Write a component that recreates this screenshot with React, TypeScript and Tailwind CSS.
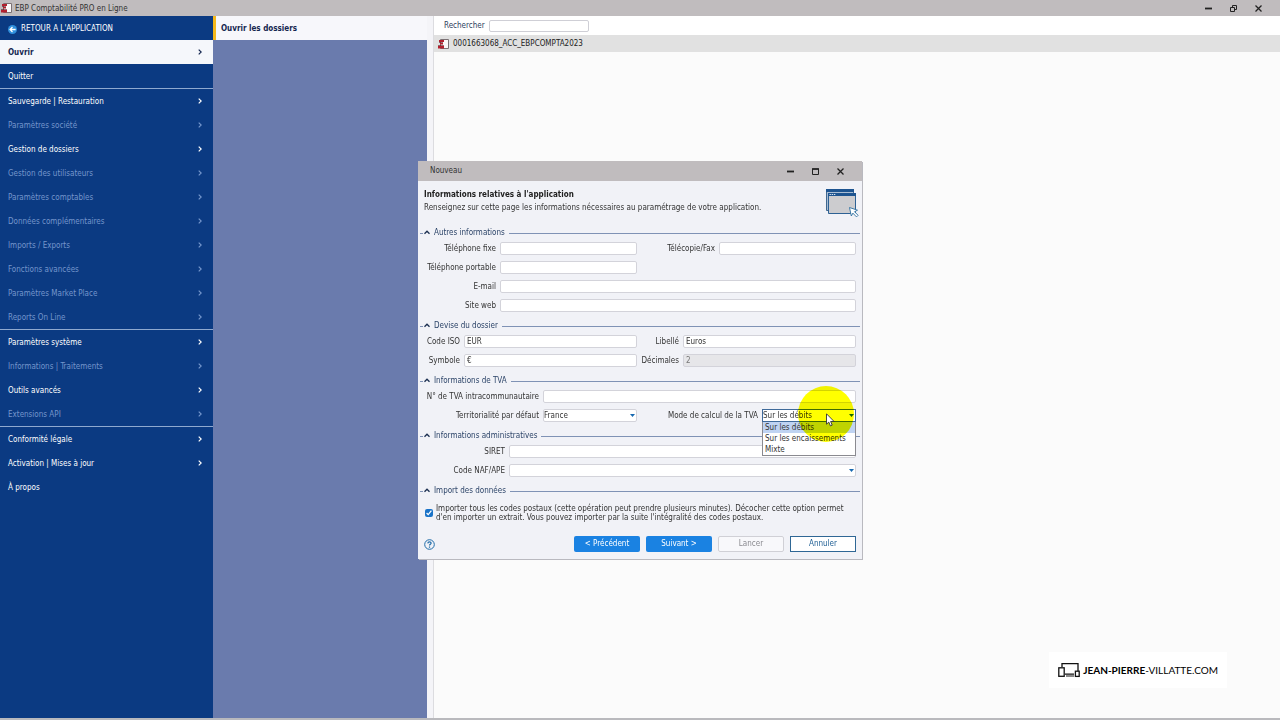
import React from 'react';

interface MenuEntry {
  label: string;
  disabled?: boolean;
  active?: boolean;
  arrow?: boolean;
}

const MENU: MenuEntry[][] = [
  [
    { label: 'Ouvrir', active: true, arrow: true },
    { label: 'Quitter' },
  ],
  [
    { label: 'Sauvegarde | Restauration', arrow: true },
    { label: 'Paramètres société', disabled: true, arrow: true },
    { label: 'Gestion de dossiers', arrow: true },
    { label: 'Gestion des utilisateurs', disabled: true, arrow: true },
    { label: 'Paramètres comptables', disabled: true, arrow: true },
    { label: 'Données complémentaires', disabled: true, arrow: true },
    { label: 'Imports / Exports', disabled: true, arrow: true },
    { label: 'Fonctions avancées', disabled: true, arrow: true },
    { label: 'Paramètres Market Place', disabled: true, arrow: true },
    { label: 'Reports On Line', disabled: true, arrow: true },
  ],
  [
    { label: 'Paramètres système', arrow: true },
    { label: 'Informations | Traitements', disabled: true, arrow: true },
    { label: 'Outils avancés', arrow: true },
    { label: 'Extensions API', disabled: true, arrow: true },
  ],
  [
    { label: 'Conformité légale', arrow: true },
    { label: 'Activation | Mises à jour', arrow: true },
    { label: 'À propos' },
  ],
];

const VAT_MODES = ['Sur les débits', 'Sur les encaissements', 'Mixte'];

const AppIcon = () => (
  <svg className="h-3 w-[11px] shrink-0" viewBox="0 0 11 12">
    <path d="M2.5 1.5h8v9h-8z" fill="#fbf8f8" stroke="#7c7275" />
    <path d="M1 2h5v2H1zM2 5h3v1.5H2zM0 8h6v2.5H0z" fill="#b3202e" />
    <path d="M0 7.5h6M1 4.5h4" stroke="#5a1a22" strokeWidth="0.6" />
  </svg>
);

const BackIcon = () => (
  <svg className="h-[9px] w-[9px] shrink-0" viewBox="0 0 10 10">
    <circle cx="5" cy="5" r="5" fill="#2f8fdc" />
    <path d="M8.5 5H2.5M5 2.3L2.3 5L5 7.7" fill="none" stroke="#fff" strokeWidth="1.4" />
  </svg>
);

const MinimizeIcon = () => (
  <svg className="h-[9px] w-[9px]" viewBox="0 0 9 9">
    <path d="M1 4.5h7" stroke="#222" strokeWidth="1.8" />
  </svg>
);

const RestoreIcon = () => (
  <svg className="h-[9px] w-[9px]" viewBox="0 0 9 9">
    <path d="M3.5 3V1.5h4v4H6M1.5 3.5h4v4h-4z" fill="none" stroke="#222" />
  </svg>
);

const MaximizeIcon = () => (
  <svg className="h-[9px] w-[9px]" viewBox="0 0 9 9">
    <path d="M1.5 2h6v5.5h-6z" fill="none" stroke="#222" />
    <path d="M1 2h7" stroke="#222" strokeWidth="1.6" />
  </svg>
);

const CloseIcon = () => (
  <svg className="h-[9px] w-[9px]" viewBox="0 0 9 9">
    <path d="M1.5 1.5l6 6M7.5 1.5l-6 6" stroke="#222" strokeWidth="1.3" />
  </svg>
);

const WindowsIcon = () => (
  <svg className="h-[30px] w-[34px] shrink-0" viewBox="0 0 34 30">
    <path d="M1.5 1.5h27v21h-27z" fill="#a9bdd4" stroke="#40688f" />
    <path d="M1 1h28v3H1z" fill="#1d5490" />
    <path d="M3.5 5.5h27v20h-27z" fill="#cccccf" stroke="#2d6194" />
    <path d="M3 5h28v3H3z" fill="#1d5490" />
    <path d="M4.5 6.5h6" stroke="#d5e3f0" strokeDasharray="1.4 0.8" />
    <path d="M24.5 19.5l8 2.7-3 1.5 3.6 3.6-1.6 1.6-3.6-3.7-1.6 2.8z" fill="#fff" stroke="#2d6fa0" strokeWidth="0.9" />
  </svg>
);

const DropArrow = () => (
  <svg className="pointer-events-none absolute top-[5px] right-[2px] h-[3px] w-[5px]" viewBox="0 0 5 3">
    <path d="M0 0h5L2.5 3z" fill="#1668b0" />
  </svg>
);

const CursorHighlight = () => (
  <div className="pointer-events-none absolute top-[-23px] left-9 z-20 h-14 w-14 rounded-full bg-[#ffff00] mix-blend-multiply" />
);

const Cursor = () => (
  <svg className="pointer-events-none absolute top-1 left-16 z-30 h-[14px] w-[9px]" viewBox="0 0 9 14">
    <path d="M0.5 0.8v10.4l2.3-2.1 1.6 3.8 1.8-.8-1.6-3.6h3.5z" fill="#fff" stroke="#333" strokeWidth="0.9" />
  </svg>
);

const fieldClass =
  'block h-[13px] w-full min-w-0 rounded-[2px] border border-[#d3d3da] bg-white text-[#333] outline-none';

interface FieldProps {
  id: string;
  label: string;
  labelWidth: string;
  children?: React.ReactNode;
  value?: string;
  disabled?: boolean;
  full?: boolean;
}

const Field: React.FC<FieldProps> = ({ id, label, labelWidth, children, value, disabled, full }) => (
  <div className={`flex h-[13px] items-center gap-1 ${full ? 'col-span-2' : ''}`}>
    <label htmlFor={id} className={`${labelWidth} flex shrink-0 justify-end whitespace-nowrap`}>
      {label}
    </label>
    <div className="relative min-w-0 flex-1">
      {children ?? (
        <input
          id={id}
          type="text"
          defaultValue={value}
          disabled={disabled}
          className={`${fieldClass} px-[2px] disabled:bg-[#e6e6e9] disabled:text-[#777]`}
        />
      )}
    </div>
  </div>
);

const Section: React.FC<{ title: string; children: React.ReactNode }> = ({ title, children }) => (
  <section>
    <button type="button" className="flex h-3 w-full items-center px-[2px] text-[#2c4468]">
      <span className="h-px w-[3px] bg-[#7f92b5]" />
      <svg className="mr-1 ml-px h-[7px] w-[6px]" viewBox="0 0 6 7">
        <path d="M0.5 3.8L3 1.2L5.5 3.8" fill="none" stroke="#1b2f50" strokeWidth="1.3" />
      </svg>
      <span className="whitespace-nowrap">{title}</span>
      <span className="ml-1 h-px flex-1 bg-[#7f92b5]" />
    </button>
    {children}
  </section>
);

const FieldGrid: React.FC<{ children: React.ReactNode }> = ({ children }) => (
  <div className="grid grid-cols-2 gap-[6px] px-[6px] pt-[3px]">{children}</div>
);

const Sidebar = () => (
  <nav className="flex w-[213px] shrink-0 flex-col bg-[#0b3a82] text-white">
    <button type="button" className="flex h-6 items-center gap-1 px-2 pt-[2px]">
      <BackIcon />
      RETOUR A L'APPLICATION
    </button>
    {MENU.map((group, i) => (
      <ul key={i} className={i > 0 ? 'border-t border-[#8fa9cf]' : ''}>
        {group.map((item) => (
          <li key={item.label}>
            <button
              type="button"
              disabled={item.disabled}
              className={`flex h-6 w-full items-center justify-between pt-[2px] pr-[11px] pl-2 ${
                item.active ? 'bg-[#f5f7fb] font-bold text-[#14264f]' : item.disabled ? 'text-[#7596cc]' : 'text-white'
              }`}
            >
              {item.label}
              {item.arrow && (
                <svg className="mb-[2px] h-[6px] w-[4px]" viewBox="0 0 4 6">
                  <path d="M0.7 0.6L3.2 3L0.7 5.4" fill="none" stroke="currentColor" strokeWidth="1.2" />
                </svg>
              )}
            </button>
          </li>
        ))}
      </ul>
    ))}
  </nav>
);

const NewFileDialog = () => (
  <div role="dialog" aria-label="Nouveau" className="w-[444px] bg-[#f1f2f7] text-[#333] shadow-[1px_1px_0_#b9b9bf]">
    <header className="flex h-5 items-center justify-between bg-[#c0bcbe] pr-[17px] pl-3">
      <span>Nouveau</span>
      <div className="flex gap-4">
        <button type="button" aria-label="Réduire"><MinimizeIcon /></button>
        <button type="button" aria-label="Agrandir"><MaximizeIcon /></button>
        <button type="button" aria-label="Fermer"><CloseIcon /></button>
      </div>
    </header>

    <div className="flex h-[46px] justify-between pt-[7px] pr-[3px] pl-[6px]">
      <div className="leading-[13px]">
        <h1 className="font-bold text-[#222]">Informations relatives à l'application</h1>
        <p>Renseignez sur cette page les informations nécessaires au paramétrage de votre application.</p>
      </div>
      <WindowsIcon />
    </div>

    <form className="flex flex-col gap-2">
      <Section title="Autres informations">
        <FieldGrid>
          <Field id="phone" label="Téléphone fixe" labelWidth="w-[72px]" />
          <Field id="fax" label="Télécopie/Fax" labelWidth="w-[72px]" />
          <Field id="mobile" label="Téléphone portable" labelWidth="w-[72px]" />
          <Field id="email" label="E-mail" labelWidth="w-[72px]" full />
          <Field id="site" label="Site web" labelWidth="w-[72px]" full />
        </FieldGrid>
      </Section>

      <Section title="Devise du dossier">
        <FieldGrid>
          <Field id="iso" label="Code ISO" labelWidth="w-9" value="EUR" />
          <Field id="currency" label="Libellé" labelWidth="w-9" value="Euros" />
          <Field id="symbol" label="Symbole" labelWidth="w-9" value="€" />
          <Field id="decimals" label="Décimales" labelWidth="w-9" value="2" disabled />
        </FieldGrid>
      </Section>

      <Section title="Informations de TVA">
        <FieldGrid>
          <Field id="vat" label="N° de TVA intracommunautaire" labelWidth="w-[115px]" full />
          <Field id="country" label="Territorialité par défaut" labelWidth="w-[115px]">
            <select id="country" className={`${fieldClass} appearance-none`}>
              <option>France</option>
            </select>
            <DropArrow />
          </Field>
          <Field id="vat-mode" label="Mode de calcul de la TVA" labelWidth="w-[115px]">
            <select
              id="vat-mode"
              className="block h-[13px] w-full appearance-none border border-[#3f6a9a] bg-white text-[#333] outline-none"
            >
              {VAT_MODES.map((mode) => (
                <option key={mode}>{mode}</option>
              ))}
            </select>
            <DropArrow />
            <ul role="listbox" className="absolute top-full right-0 left-0 z-10 border border-t-0 border-[#8a8a90] bg-white">
              {VAT_MODES.map((mode, i) => (
                <li
                  key={mode}
                  role="option"
                  aria-selected={i === 0}
                  className={`h-[11px] px-[2px] leading-[11px] whitespace-nowrap ${i === 0 ? 'bg-[#bfd3f2]' : ''}`}
                >
                  {mode}
                </li>
              ))}
            </ul>
            <CursorHighlight />
            <Cursor />
          </Field>
        </FieldGrid>
      </Section>

      <Section title="Informations administratives">
        <FieldGrid>
          <Field id="siret" label="SIRET" labelWidth="w-[81px]" full />
          <Field id="naf" label="Code NAF/APE" labelWidth="w-[81px]" full>
            <select id="naf" className={`${fieldClass} appearance-none`}>
              <option></option>
            </select>
            <DropArrow />
          </Field>
        </FieldGrid>
      </Section>

      <Section title="Import des données">
        <div className="flex items-center gap-[3px] px-[7px] pt-[7px]">
          <input id="zip" type="checkbox" defaultChecked className="h-2 w-2 shrink-0 accent-[#1a73c8]" />
          <label htmlFor="zip" className="leading-[9px] whitespace-nowrap">
            Importer tous les codes postaux (cette opération peut prendre plusieurs minutes). Décocher cette option permet
            <br />
            d'en importer un extrait. Vous pouvez importer par la suite l'intégralité des codes postaux.
          </label>
        </div>
      </Section>
    </form>

    <footer className="flex items-center justify-between px-[6px] pt-[14px] pb-[7px]">
      <button type="button" aria-label="Aide">
        <svg className="h-[11px] w-[11px]" viewBox="0 0 11 11" fill="none" stroke="#1f6ca8">
          <circle cx="5.5" cy="5.5" r="4.8" />
          <path d="M3.8 4.4C3.9 2.4 7.2 2.5 7.1 4.3C7 5.3 5.5 5.3 5.5 6.6M5.5 7.6v1.1" strokeWidth="1.2" />
        </svg>
      </button>
      <div className="flex gap-[6px]">
        <button type="button" className="h-4 w-[66px] rounded-[2px] bg-[#1a82e2] text-white">&lt; Précédent</button>
        <button type="button" className="h-4 w-[66px] rounded-[2px] bg-[#1a82e2] text-white">Suivant &gt;</button>
        <button type="button" disabled className="h-4 w-[66px] rounded-[2px] border border-[#d0d0d6] bg-[#f8f8fb] text-[#8a8a90]">Lancer</button>
        <button type="button" className="h-4 w-[66px] border border-[#2f6795] bg-white text-[#1f5f94]">Annuler</button>
      </div>
    </footer>
  </div>
);

const Watermark = () => (
  <div className="flex h-9 items-center gap-[3px] bg-white px-[9px] font-['Lato',sans-serif] text-[10px] text-black">
    <svg className="h-4 w-[22px]" viewBox="0 0 22 16" fill="none" stroke="#111" strokeWidth="1.3">
      <path d="M4 5V1.7h16V9M7 12.2h9" />
      <path d="M8 14h8" strokeWidth="1" />
      <rect x="0.8" y="5.8" width="5.4" height="8.5" />
      <rect x="17.4" y="9.2" width="3.8" height="5.2" />
    </svg>
    <span><strong className="font-bold">JEAN-PIERRE</strong>-VILLATTE.COM</span>
  </div>
);

export default function App() {
  return (
    <div className="flex h-screen flex-col overflow-hidden bg-[#fbfbfb] font-['DejaVu_Sans_Condensed','DejaVu_Sans',sans-serif] text-[8px] leading-3">
      <header className="flex h-4 shrink-0 items-center justify-between bg-[#c0bcbe] pr-[17px] pl-px text-[#333]">
        <div className="flex items-center gap-[3px]">
          <AppIcon />
          <span className="pt-[2px]">EBP Comptabilité PRO en Ligne</span>
        </div>
        <div className="flex gap-4">
          <button type="button" aria-label="Réduire"><MinimizeIcon /></button>
          <button type="button" aria-label="Restaurer"><RestoreIcon /></button>
          <button type="button" aria-label="Fermer"><CloseIcon /></button>
        </div>
      </header>

      <div className="flex min-h-0 flex-1 border-b-2 border-[#b9b9bd]">
        <Sidebar />
        <aside className="w-[214px] shrink-0 bg-[#6a7bad]">
          <h2 className="flex h-6 items-center border-l-3 border-[#f5b81c] bg-[#f7f7fb] pt-[2px] pl-[5px] font-bold text-[#14264f]">
            Ouvrir les dossiers
          </h2>
        </aside>
        <main className="flex min-w-0 flex-1 border-l-6 border-[#f4f4f8]">
          <div className="flex min-w-0 flex-1 flex-col border-l border-[#dcdce0]">
            <div className="flex h-[19px] items-center gap-1 bg-white pl-[10px]">
              <label htmlFor="search" className="text-[#2c3e5c]">Rechercher</label>
              <input id="search" type="text" className="h-3 w-[100px] rounded-[2px] border border-[#cfcfd6] bg-white px-1 outline-none" />
            </div>
            <ul>
              <li className="flex h-[17px] items-center gap-1 bg-[#e1e1e1] pl-1 text-[#222]">
                <AppIcon />
                0001663068_ACC_EBPCOMPTA2023
              </li>
            </ul>
            <div className="mt-auto mr-[53px] mb-[30px] self-end">
              <Watermark />
            </div>
          </div>
        </main>
      </div>

      <div className="fixed inset-0 flex items-center justify-center">
        <NewFileDialog />
      </div>
    </div>
  );
}
